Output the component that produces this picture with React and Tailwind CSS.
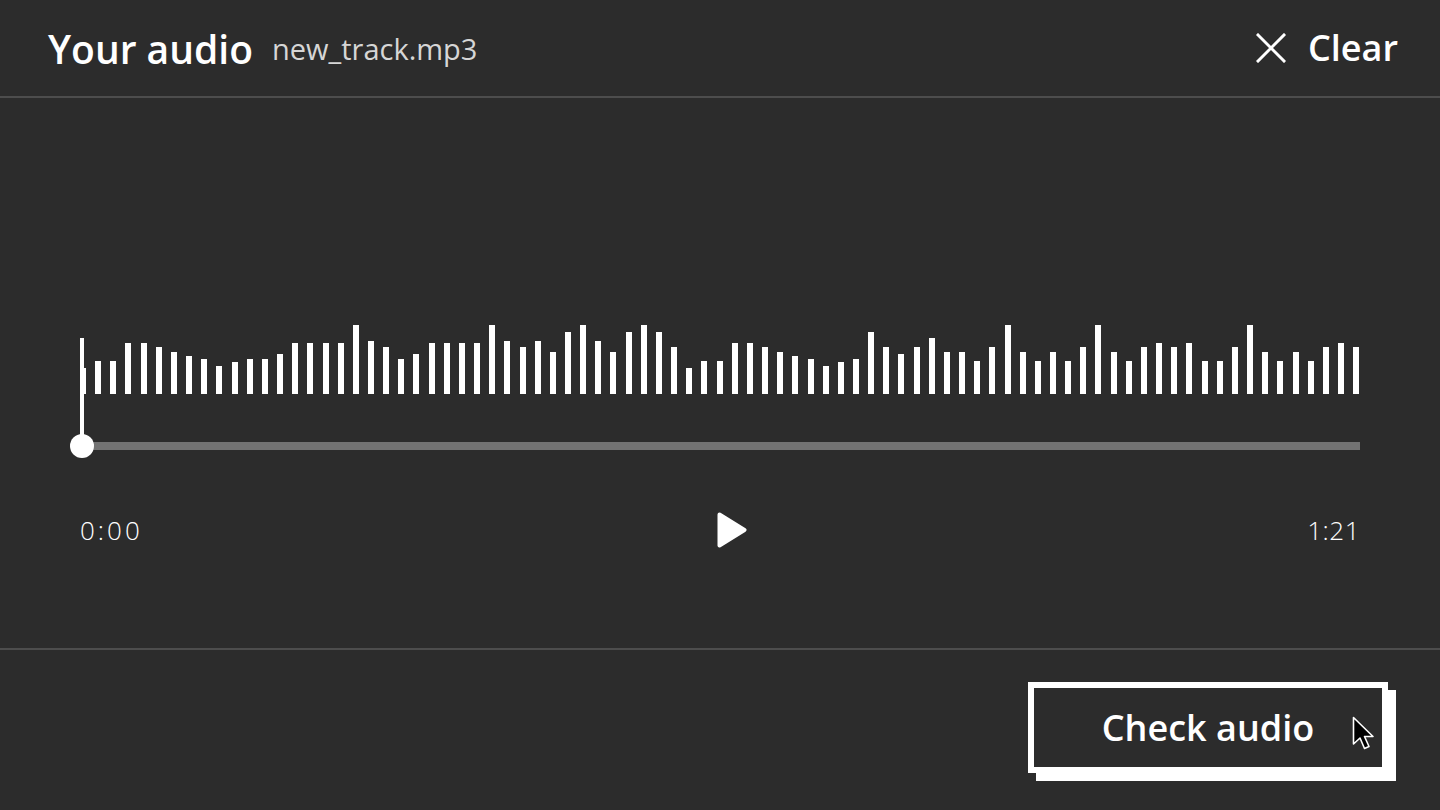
import React from "react";

const tops = [
  175,153,153,98,98,112,126,139,146,168,156,146,146,132,98,98,98,98,45,92,112,146,132,98,98,
  98,98,45,92,112,92,126,65,45,92,126,65,45,65,112,175,153,153,98,98,112,126,139,146,168,156,146,65,112,132,112,85,
  126,126,153,112,45,126,153,126,153,112,45,126,153,112,98,112,98,153,153,112,45,126,153,126,153,112,98,112,
];

function Play() {
  return (
    <svg width="30" height="36" viewBox="0 0 30 36" className="ml-[24px]">
      <path d="M2.5 2.5 L27.5 18 L2.5 33.5 Z" fill="#fff" stroke="#fff" strokeWidth="4" strokeLinejoin="round" />
    </svg>
  );
}

function Cursor() {
  return (
    <svg width="26" height="38" viewBox="0 0 26 38" className="absolute left-[318px] top-[28px]">
      <path d="M1.5 1.5 L1.5 28 L8 22 L12.5 32.5 L17 30.5 L12.5 20.5 L21 20.5 Z" fill="#000" stroke="#fff" strokeWidth="1.6" strokeLinejoin="round" />
    </svg>
  );
}

export default function App() {
  return (
    <div className="w-[1440px] h-[810px] bg-[#2c2c2c] text-white font-['Open_Sans',sans-serif] flex flex-col overflow-hidden">
      <header className="h-[98px] border-b-2 border-[#4d4d4d] flex items-center justify-between pl-[48px] pr-[42px] shrink-0">
        <div className="flex items-center gap-[19px]">
          <span className="text-[39px] font-semibold leading-none">Your audio</span>
          <span className="text-[29px] leading-none text-[#d6d6d6]">new_track.mp3</span>
        </div>
        <div className="flex items-center gap-[22px]">
          <svg width="30" height="30" viewBox="0 0 30 30">
            <path d="M2 2 L28 28 M28 2 L2 28" stroke="#fff" strokeWidth="3" strokeLinecap="square" />
          </svg>
          <span className="text-[36px] font-semibold leading-none">Clear</span>
        </div>
      </header>

      <main className="h-[552px] border-b-2 border-[#4d4d4d] shrink-0 flex flex-col px-[80px] pt-[227px]">
        <div className="h-[69px] flex items-end justify-between">
          {tops.map((t, i) => (
            <div key={i} className="w-[6px] bg-white" style={{ height: Math.round(84 - t / 3) + "px" }} />
          ))}
        </div>
        <div className="relative mt-[48px] h-[8px] bg-[#737373]">
          <div className="absolute left-0 top-[-104px] w-[4px] h-[110px] bg-white" />
          <div className="absolute left-[-10px] top-[-8px] w-[24px] h-[24px] rounded-full bg-white" />
        </div>
        <div className="mt-[62px] grid grid-cols-3 items-center h-[36px]">
          <span className="text-[26px] font-light tracking-[3px] leading-none justify-self-start">0:00</span>
          <div className="justify-self-center flex">
            <Play />
          </div>
          <span className="text-[26px] font-light tracking-[0.5px] leading-none justify-self-end">1:21</span>
        </div>
      </main>

      <footer className="flex-1 flex justify-end items-start pt-[32px] pr-[52px]">
        <button className="relative w-[360px] h-[91px] border-[6px] border-white bg-[#2c2c2c] shadow-[8px_8px_0_#fff] flex items-center justify-center">
          <span className="text-[36px] font-semibold leading-none text-white">Check audio</span>
          <Cursor />
        </button>
      </footer>
    </div>
  );
}
